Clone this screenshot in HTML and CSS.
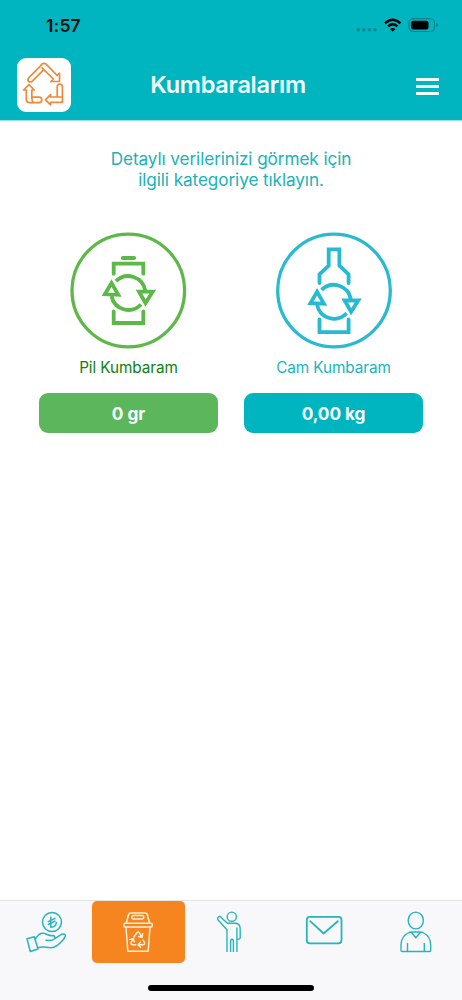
FILE: index.html
```html
<!DOCTYPE html>
<html lang="tr">
<head>
<meta charset="utf-8">
<meta name="viewport" content="width=device-width, initial-scale=1">
<title>Kumbaralarım</title>
<link rel="stylesheet" href="styles.css">
</head>
<body>
<div class="app">
  <header class="header">
    <div class="status">
      <span class="time">1:57</span>
      <svg class="status-icons" viewBox="354 14 88 22" width="88" height="22">
        <g class="dots"><circle cx="358.3" cy="29.8" r="1.8"/><circle cx="363.8" cy="29.8" r="1.8"/><circle cx="369.4" cy="29.8" r="1.8"/><circle cx="374.9" cy="29.8" r="1.8"/></g>
        <g class="wifi"><path d="M385 23.3Q392.7 16.2 400.4 23.3"/><path d="M388 26.4Q392.7 22.2 397.4 26.4"/><path class="wifi-dot" d="M390 29Q392.7 26.800 395.4 29L392.7 31.800Z"/></g>
        <rect class="shell" x="409" y="18.700" width="25.500" height="12.800" rx="3.800"/>
        <rect x="411" y="20.700" width="17.500" height="8.900" rx="2"/>
        <path class="nub" d="M436.200 23Q438 23.600 438 25.100T436.200 27.200Z"/>
      </svg>
    </div>
    <div class="nav">
      <div class="logo">
        <svg viewBox="17 58 54 54" width="54" height="54">
          <path d="M43.600 69.800L32.300 81.200Q30 82.600 28.600 81.300T28.700 77.900L40.500 65.800Q43.700 61.500 46.800 64.800L57 75.300L59.500 73.200V81.500H50.800L53.400 79L42 67.800"/>
          <path d="M31.800 97.200H39Q41.800 97.500 41.800 99.900T39 102.600H29.500Q26.300 102.600 26.300 99.500V90H23.600L28.900 84.600L34.200 90H31.800V97.200Q31.800 99.800 33 102.400"/>
          <path d="M57.200 97V87Q57.200 84 59.800 84T62.400 87V102.300H50.500V104.800L45.400 99.800L50.500 94.600V97ZM57.200 97H62"/>
        </svg>
      </div>
      <h1 class="title">Kumbaralarım</h1>
      <div class="menu"><i></i><i></i><i></i></div>
    </div>
  </header>

  <main class="content">
    <p class="hint">Detaylı verilerinizi görmek için<br>ilgili kategoriye tıklayın.</p>
    <div class="cards">
      <section class="card green">
        <svg class="emblem" viewBox="70 232 118 118" width="118" height="118">
          <circle cx="128.300" cy="290.500" r="56.300"/>
          <path class="thick" d="M122.800 258H134.200M113.700 273.700V263.700H143.300V273.700M113.700 311.500V323H143.300V311.500"/>
          <g class="thick" id="cycle">
            <path class="butt" d="M116 281.100A17.300 17.300 0 0 1 145.200 290.500M111.500 296A17.300 17.300 0 0 0 141 304.500"/>
            <path d="M111.500 283L104.900 294.300L118.300 294.800ZM139 291.700H152.700L145.500 303Z"/>
          </g>
        </svg>
        <h2 class="name">Pil Kumbaram</h2>
        <div class="amount">0 gr</div>
      </section>
      <section class="card teal">
        <svg class="emblem" viewBox="274.700 232 118 118" width="118" height="118">
          <circle cx="333.700" cy="290.500" r="56.300"/>
          <path class="thick" d="M319.200 283V274.300L328.400 265.700V249.400H339.100V265.700L348.300 274.300V283M319.200 319.500V332.200H348.300V319.500"/>
          <use class="thick" href="#cycle" x="205.300" y="8.800"/>
        </svg>
        <h2 class="name">Cam Kumbaram</h2>
        <div class="amount">0,00 kg</div>
      </section>
    </div>
  </main>

  <footer class="footer">
    <nav class="tabs">
      <a class="tab">
        <svg viewBox="0 901 92 62" width="92" height="62">
          <circle cx="52" cy="922" r="9.500"/>
          <path d="M50.800 917V927.200Q56 927.200 56.300 922.500M48.300 921.700L55 918.300M48.300 924.500L55 921.200"/>
          <path d="M27 938.700L34.300 936.700L38 949L30.300 951.500Z"/>
          <path d="M35.300 938.700L39 934.500Q42.500 932.300 46.500 934.200T53.500 935.500Q56 936.800 54 939.300Q52.500 940.700 46 940.300M54.800 938.600L61.500 934.300Q65.300 933 65.300 936Q63.500 941 56.500 945.800Q53.500 948.200 49 947.600Q42.500 946.300 37.600 947.700"/>
        </svg>
      </a>
      <a class="tab active">
        <svg viewBox="92.500 901 92 62" width="92" height="62">
          <path d="M126.800 923L129 914.800Q129.500 912.900 131.500 912.900H145.300Q147.300 912.900 147.800 914.800L150 923"/>
          <rect x="132.300" y="915.500" width="12" height="3.400" rx="1.700"/>
          <rect x="124.300" y="923.200" width="28.500" height="3.700" rx="1.500"/>
          <path d="M126.500 927L128.300 951.300H148.700L150.500 927"/>
          <path d="M134.500 937L137.400 932.700Q138.400 931.300 139.700 932.700L142.300 937M143.200 933.700L142.500 937.400L139.200 936.600M136.200 944.800H133Q130.600 944.200 131.900 941.800L133.500 939M130.500 939.500L133.800 938.600L134.800 941.900M143.600 940L145 942.500Q145.500 944.700 143.500 944.800H138.500M141 942.300L138.400 944.800L141 947.300"/>
        </svg>
      </a>
      <a class="tab">
        <svg class="person" viewBox="185 901 92 62" width="92" height="62">
          <circle cx="231.800" cy="916.700" r="4.600"/>
          <path d="M227 952V929.800L218.300 920.300Q216.800 918.400 218.400 917T221.400 917.700L227.500 923.300H235.500Q240.200 923.500 240.200 929V937.500Q240.200 939.500 237.100 939.200M236.900 927.500V952M230.600 952V942Q230.600 939.300 232 939.300T233.400 942V952"/>
        </svg>
      </a>
      <a class="tab">
        <svg class="mail" viewBox="277 901 92 62" width="92" height="62">
          <rect x="306.800" y="916.900" width="34.700" height="26.400" rx="3"/>
          <path d="M310.200 921.200L323.600 933.500L337.800 921.200"/>
        </svg>
      </a>
      <a class="tab">
        <svg class="profile" viewBox="370 901 92 62" width="92" height="62">
          <ellipse cx="415.800" cy="920.500" rx="7.600" ry="8.400"/>
          <path d="M402.200 951.500Q401 951.500 401 950.300V945Q401.200 936.500 408 933Q409.500 932 412 932H419.800Q422.300 932 423.800 933Q430.500 936.500 430.700 945V950.300Q430.700 951.500 429.500 951.500ZM407.500 951V943.500M424.300 951V943.500M411.500 932.500L415.800 937.700L420.200 932.500"/>
        </svg>
      </a>
    </nav>
    <div class="home"></div>
  </footer>
</div>
</body>
</html>
```

FILE: styles.css
```css
* { box-sizing: border-box; margin: 0; padding: 0; }
body { font-family: Inter, "Liberation Sans", sans-serif; background: #fff; }
svg { display: block; fill: none; stroke-linejoin: round; stroke-linecap: round; }
.app { display: flex; flex-direction: column; width: 462px; height: 1000px; overflow: hidden; }

.header { height: 121px; background: #00b5bf; border-bottom: 1px solid #9fe0e4; }
.status { display: flex; justify-content: space-between; height: 50px; padding: 14px 20px 0 46px; }
.time { font-size: 17.500px; font-weight: 600; line-height: 23px; letter-spacing: 0.200px; color: #061012; }
.status-icons { fill: #000; }
.dots, .nub { fill: #078a93; }
.wifi { fill: none; stroke: #000; stroke-width: 2.500; stroke-linecap: butt; }
.wifi .wifi-dot { fill: #000; stroke: none; }
.shell { fill: none; stroke: #077c84; stroke-width: 1; }

.nav { display: grid; grid-template-columns: 54px 1fr 54px; align-items: center; height: 70px; padding: 0 23px 0 17px; }
.logo { width: 54px; height: 54px; border-radius: 9px; background: #fff; }
.logo svg { stroke: #ee8a38; stroke-width: 1.700; }
.title { font-size: 23.500px; font-weight: 600; line-height: 30px; letter-spacing: -0.270px; text-align: center; color: #f0ffff; }
.menu { display: flex; flex-direction: column; justify-self: end; gap: 4px; width: 23px; padding-top: 3px; }
.menu i { height: 3px; background: #f2ffff; }

.content { flex: 1; padding-top: 27px; }
.hint { font-size: 17.200px; line-height: 21px; letter-spacing: -0.100px; text-align: center; color: #20b2b5; }
.cards { display: flex; justify-content: space-between; padding: 42px 39px 0; }
.card { display: flex; flex-direction: column; align-items: center; width: 179px; }
.emblem { stroke-width: 3.300; }
.thick { stroke-width: 3.800; stroke-linejoin: miter; }
.butt { stroke-linecap: butt; }
.name { margin-top: 8px; font-size: 15.300px; font-weight: 400; line-height: 20px; letter-spacing: -0.070px; }
.amount { width: 179px; height: 40px; margin-top: 15px; border-radius: 9px; font-size: 17.300px; font-weight: 700; line-height: 41px; letter-spacing: -0.100px; text-align: center; color: #f6ffff; }
.green .emblem { stroke: #5cb947; }
.green .name { color: #0d800f; }
.green .amount { background: #5cb65c; }
.teal .emblem { stroke: #27bad0; }
.teal .name { color: #18b4bd; }
.teal .amount { background: #00b5bf; }

.footer { height: 100px; background: #f8f7fa; border-top: 1px solid #e4e4e6; }
.tabs { display: grid; grid-template-columns: repeat(5, 1fr); height: 62px; }
.tab svg { stroke: #26b5bf; stroke-width: 1.500; }
.tab.active { border-radius: 5px; background: #f6841f; }
.tab.active svg { stroke: #fff0d8; }
.tab .person { stroke-width: 1.400; stroke-linecap: butt; }
.tab .mail { stroke-width: 1.800; }
.tab .profile { stroke-width: 1.400; }
.home { width: 166px; height: 6px; margin: 22px auto 0; border-radius: 3px; background: #000; }
```
